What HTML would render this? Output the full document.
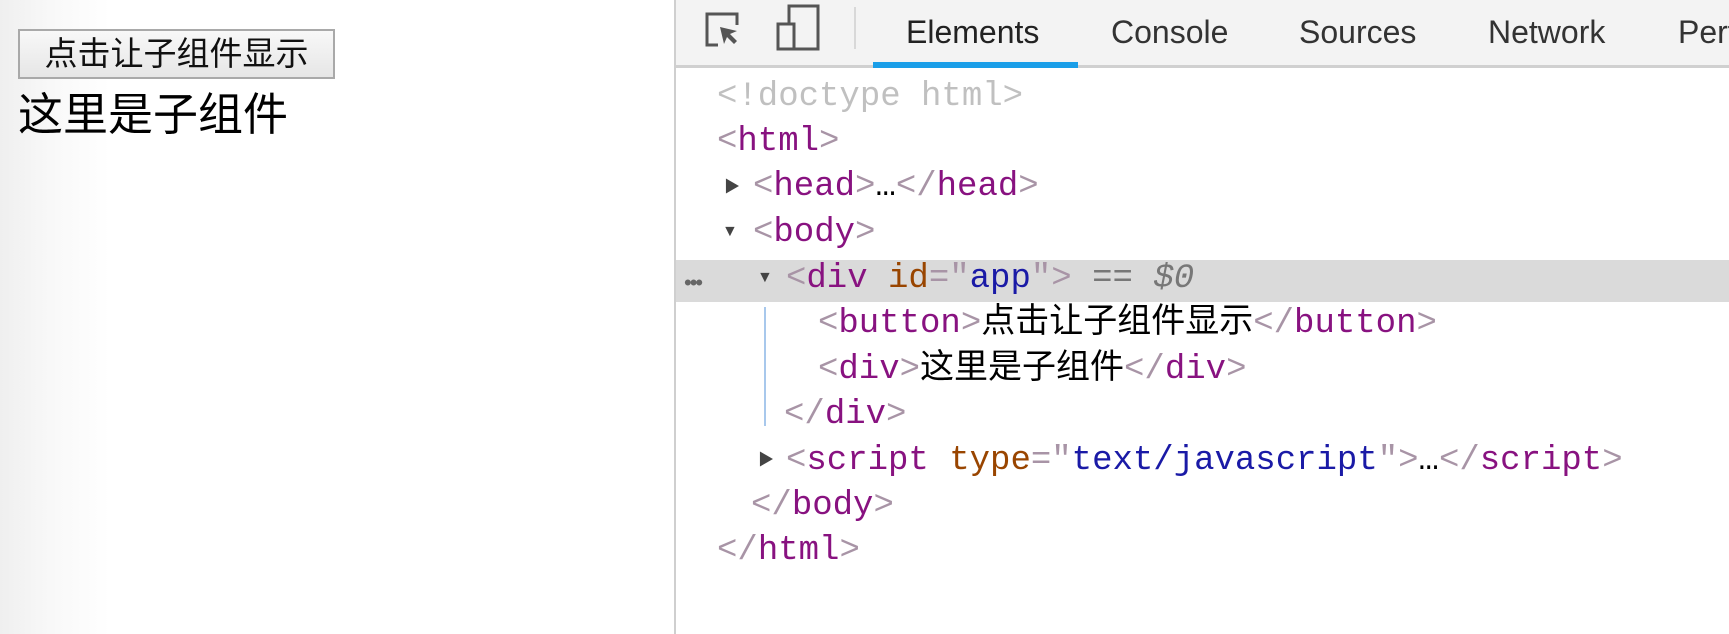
<!DOCTYPE html>
<html><head><meta charset="utf-8"><style>
body{margin:0;width:1729px;height:634px;overflow:hidden;background:#fff;position:relative;font-family:"Liberation Sans","Noto Sans CJK SC",sans-serif}
.left{position:absolute;left:0;top:0;width:675px;height:634px;background:linear-gradient(90deg,#efefef 0,#f8f8f8 50px,#fff 110px)}
.btn{position:absolute;left:18px;top:29px;width:313px;height:46px;border:2px solid #a9a9a9;background:linear-gradient(#f8f8f8,#e6e6e6);font-size:33px;line-height:46px;text-align:center;color:#111;box-sizing:content-box}
.child{position:absolute;left:18px;top:90px;font-size:45px;line-height:50px;color:#000}
.div{position:absolute;left:674px;top:0;width:2px;height:634px;background:#cfcfcf}
.bar{position:absolute;left:676px;top:0;right:0;height:65px;background:#f3f3f3;border-bottom:3px solid #d0d0d0}
.tab{position:absolute;top:12px;font-size:32px;color:#333;line-height:40px}
.ul{position:absolute;left:873px;top:62px;width:205px;height:6px;background:#1a9ee8}
.sep{position:absolute;left:854px;top:7px;width:2px;height:42px;background:#d8d8d8}
.code{position:absolute;font-family:"Liberation Mono","Noto Sans CJK SC",monospace;font-size:34px;line-height:45px;white-space:pre;color:#000}
.t{color:#881280}.b{color:#a894a6}.an{color:#994500}.av{color:#1a1aa6}
.hl{position:absolute;left:676px;top:260px;right:0;height:42px;background:#dadada}
.tri{position:absolute;font-size:16px;color:#444;line-height:20px}
.vl{position:absolute;left:764px;top:307px;width:2px;height:119px;background:#a8c8ec}
</style></head><body>
<div class="left"></div>
<div class="btn">点击让子组件显示</div>
<div class="child">这里是子组件</div>
<div class="div"></div>
<div class="bar"></div>
<svg style="position:absolute;left:704px;top:11px" width="40" height="40" viewBox="0 0 40 40"><path d="M14 34H3V3h30v11" fill="none" stroke="#555" stroke-width="3"/><path d="M16 16l4 17 3-7 7 7 3-3-7-7 7-3z" fill="#555"/></svg>
<svg style="position:absolute;left:776px;top:4px" width="46" height="48" viewBox="0 0 46 48"><rect x="13" y="2" width="29" height="43" fill="none" stroke="#555" stroke-width="3"/><rect x="2" y="20" width="16" height="25" fill="#f3f3f3" stroke="#555" stroke-width="3"/></svg>
<div class="sep"></div>
<div class="tab" style="left:906px;color:#222">Elements</div>
<div class="tab" style="left:1111px">Console</div>
<div class="tab" style="left:1299px">Sources</div>
<div class="tab" style="left:1488px">Network</div>
<div class="tab" style="left:1678px">Perf</div>
<div class="ul"></div>
<div class="hl"></div>
<div class="vl"></div>
<div class="code" style="left:717px;top:75px;color:#c0c0c0">&lt;!doctype html&gt;</div>
<div class="code" style="left:717px;top:120px"><span class="b">&lt;</span><span class="t">html</span><span class="b">&gt;</span></div>
<div class="tri" style="left:724px;top:178px">▶</div>
<div class="code" style="left:753px;top:165px"><span class="b">&lt;</span><span class="t">head</span><span class="b">&gt;</span>…<span class="b">&lt;/</span><span class="t">head</span><span class="b">&gt;</span></div>
<div class="tri" style="left:722px;top:222px">▼</div>
<div class="code" style="left:753px;top:211px"><span class="b">&lt;</span><span class="t">body</span><span class="b">&gt;</span></div>
<div style="position:absolute;left:684px;top:270px;font-size:22px;color:#666;letter-spacing:-2px">•••</div>
<div class="tri" style="left:757px;top:268px">▼</div>
<div class="code" style="left:786px;top:257px"><span class="b">&lt;</span><span class="t">div</span> <span class="an">id</span><span class="b">="</span><span class="av">app</span><span class="b">"&gt;</span> <span style="color:#777">== <i>$0</i></span></div>
<div class="code" style="left:818px;top:302px"><span class="b">&lt;</span><span class="t">button</span><span class="b">&gt;</span>点击让子组件显示<span class="b">&lt;/</span><span class="t">button</span><span class="b">&gt;</span></div>
<div class="code" style="left:818px;top:348px"><span class="b">&lt;</span><span class="t">div</span><span class="b">&gt;</span>这里是子组件<span class="b">&lt;/</span><span class="t">div</span><span class="b">&gt;</span></div>
<div class="code" style="left:784px;top:393px"><span class="b">&lt;/</span><span class="t">div</span><span class="b">&gt;</span></div>
<div class="tri" style="left:758px;top:451px">▶</div>
<div class="code" style="left:786px;top:439px"><span class="b">&lt;</span><span class="t">script</span> <span class="an">type</span><span class="b">="</span><span class="av">text/javascript</span><span class="b">"&gt;</span>…<span class="b">&lt;/</span><span class="t">script</span><span class="b">&gt;</span></div>
<div class="code" style="left:751px;top:484px"><span class="b">&lt;/</span><span class="t">body</span><span class="b">&gt;</span></div>
<div class="code" style="left:717px;top:529px"><span class="b">&lt;/</span><span class="t">html</span><span class="b">&gt;</span></div>
</body></html>
